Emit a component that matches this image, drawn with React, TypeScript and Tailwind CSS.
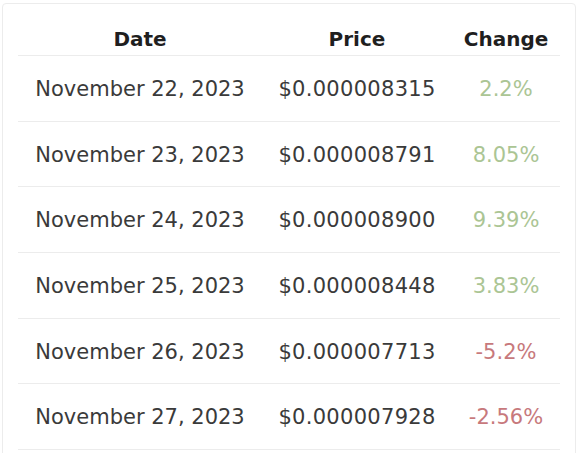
const ROWS = [
  { date: 'November 22, 2023', price: '$0.000008315', change: '2.2%', up: true },
  { date: 'November 23, 2023', price: '$0.000008791', change: '8.05%', up: true },
  { date: 'November 24, 2023', price: '$0.000008900', change: '9.39%', up: true },
  { date: 'November 25, 2023', price: '$0.000008448', change: '3.83%', up: true },
  { date: 'November 26, 2023', price: '$0.000007713', change: '-5.2%', up: false },
  { date: 'November 27, 2023', price: '$0.000007928', change: '-2.56%', up: false },
]

export default function App() {
  return (
    <div className="h-[453px] overflow-hidden bg-white pl-[2px] pr-[1px] pt-[3px] font-['DejaVu_Sans',sans-serif]">
      <div className="h-[500px] rounded-sm border border-[#ececec] bg-white px-[15px] pt-[19px]">
        <div className="grid h-[33px] grid-cols-[244px_190px_108px] items-start border-b border-[#ececec] text-center text-[20px] font-bold leading-[33px] text-[#1f1f1f]">
          <div>Date</div>
          <div>Price</div>
          <div>Change</div>
        </div>
        {ROWS.map((r) => (
          <div
            key={r.date}
            className="grid h-[65.67px] grid-cols-[244px_190px_108px] items-center border-b border-[#ececec] pt-[3px] text-center text-[21px] text-[#3a3a3a]"
          >
            <div>{r.date}</div>
            <div className="tracking-[0.3px]">{r.price}</div>
            <div className={r.up ? 'text-[#abc594]' : 'text-[#c7797c]'}>{r.change}</div>
          </div>
        ))}
      </div>
    </div>
  )
}
